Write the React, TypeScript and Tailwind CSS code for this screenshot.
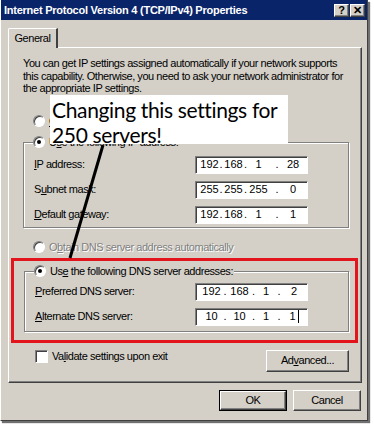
import React from "react";

const raised =
  "bg-[#d4d0c8] border border-t-white border-l-white border-r-[#404040] border-b-[#404040] shadow-[inset_-1px_-1px_0_#808080]";

const ipCols = "grid-cols-[15px_8px_17px_7px_19px_18px_14px]";
const dnsCols = "grid-cols-[19px_8px_21px_7px_18px_8px_22px]";

const U = ({ children }: { children: React.ReactNode }) => <span className="underline underline-offset-[1px]">{children}</span>;

const Radio = ({ checked, disabled }: { checked?: boolean; disabled?: boolean }) => (
  <span className="relative w-[12px] h-[12px] rounded-full bg-white border border-t-[#808080] border-l-[#808080] border-r-white border-b-white shadow-[inset_1px_1px_0_#404040] flex items-center justify-center shrink-0">
    {checked && <span className={`w-[4px] h-[4px] rounded-full ${disabled ? "bg-[#808080]" : "bg-black"}`} />}
  </span>
);

const IpBox = ({ parts, cols, cursor }: { parts: string[]; cols: string; cursor?: boolean }) => (
  <div className="w-[113px] h-[18px] bg-white border border-t-[#808080] border-l-[#808080] border-r-white border-b-white shadow-[inset_1px_1px_0_#404040] pl-[6px] flex items-center tracking-normal">
    <div className={`grid ${cols} items-center`}>
      {parts.map((p, i) => (
        <React.Fragment key={i}>
          {i > 0 && <span className="flex justify-center">.</span>}
          <span className="flex justify-center">
            {p}
            {cursor && i === parts.length - 1 && <span className="w-px h-[13px] bg-black ml-[2px]" />}
          </span>
        </React.Fragment>
      ))}
    </div>
  </div>
);

const Row = ({ label, parts, cols, cursor }: { label: React.ReactNode; parts: string[]; cols: string; cursor?: boolean }) => (
  <div className="flex items-center justify-between h-[18px]">
    <span>{label}</span>
    <IpBox parts={parts} cols={cols} cursor={cursor} />
  </div>
);

export default function App() {
  return (
    <div className="relative w-[374px] h-[426px] bg-white overflow-hidden text-[11px] tracking-[-0.45px] text-black font-['Liberation_Sans',Arial,sans-serif] leading-[13px]">
      <div className="w-[368px] h-[421px] bg-[#d4d0c8] border-r border-b border-[#404040] border-l border-l-white shadow-[2px_2px_1px_#707070] flex flex-col">
        {/* title bar */}
        <div className="h-[20px] bg-[#0a246a] flex items-center justify-between pl-[3px] pr-[2px]">
          <span className="text-white font-bold text-[11px] tracking-[-0.25px]">Internet Protocol Version 4 (TCP/IPv4) Properties</span>
          <div className="flex">
            <span className={`${raised} w-[15px] h-[13px] flex items-center justify-center font-bold text-[11px] leading-none`}>?</span>
            <span className={`${raised} w-[15px] h-[13px] ml-[1px] flex items-center justify-center font-bold text-[11px] leading-none`}>✕</span>
          </div>
        </div>

        {/* tab */}
        <div className="mt-[8px] ml-[7px] flex">
          <div className="h-[20px] w-[50px] border-t border-l border-white border-r-2 border-r-[#404040] rounded-tl-[2px] flex items-center justify-center relative z-10 mb-[-1px] bg-[#d4d0c8]">
            General
          </div>
        </div>

        {/* panel */}
        <div className="ml-[7px] w-[354px] h-[336px] border border-t-white border-l-white border-r-[#404040] border-b-[#404040] shadow-[inset_-1px_-1px_0_#808080] pl-[14px] pr-[10px] flex flex-col">
          <p className="mt-[9px] leading-[12.5px]">
            You can get IP settings assigned automatically if your network supports this capability. Otherwise, you need to ask your network administrator for the appropriate IP settings.
          </p>

          <div className="mt-[20px] ml-[10px] flex items-center gap-[4px] h-[13px]">
            <Radio />
            <span><U>O</U>btain an IP address automatically</span>
          </div>

          <fieldset className="mt-[8px] mr-[2px] border border-[#808080] shadow-[inset_1px_1px_0_white,1px_1px_0_white] px-[10px] pb-[3px]">
            <legend className="ml-[-1px] flex items-center gap-[4px] bg-[#d4d0c8] pr-[1px] h-[13px]">
              <Radio checked />
              <span>U<U>s</U>e the following IP address:</span>
            </legend>
            <div className="mt-[7px] flex flex-col gap-[7px] mr-[30px]">
              <Row label={<><U>I</U>P address:</>} parts={["192", "168", "1", "28"]} cols={ipCols} />
              <Row label={<>S<U>u</U>bnet mask:</>} parts={["255", "255", "255", "0"]} cols={ipCols} />
              <Row label={<><U>D</U>efault gateway:</>} parts={["192", "168", "1", "1"]} cols={ipCols} />
            </div>
          </fieldset>

          <div className="mt-[13px] ml-[10px] flex items-center gap-[4px] h-[13px] text-[#808080] [text-shadow:1px_1px_0_white]">
            <Radio disabled />
            <span>O<U>b</U>tain DNS server address automatically</span>
          </div>

          <div className="mt-[4px] ml-[-12px] w-[347px] border-[3px] border-[#e3151c] pt-[4px] pl-[10px] pr-[6px] pb-[8px]">
            <fieldset className="border border-[#808080] shadow-[inset_1px_1px_0_white,1px_1px_0_white] px-[10px] pb-[5px]">
              <legend className="ml-[-1px] flex items-center gap-[4px] bg-[#d4d0c8] pr-[1px] h-[13px]">
                <Radio checked />
                <span>Us<U>e</U> the following DNS server addresses:</span>
              </legend>
              <div className="mt-[5px] flex flex-col gap-[7px] mr-[30px]">
                <Row label={<><U>P</U>referred DNS server:</>} parts={["192", "168", "1", "2"]} cols={dnsCols} />
                <Row label={<><U>A</U>lternate DNS server:</>} parts={["10", "10", "1", "1"]} cols={dnsCols} cursor />
              </div>
            </fieldset>
          </div>

          <div className="mt-[7px] flex items-start justify-between">
            <div className="ml-[12px] flex items-center gap-[4px] h-[13px]">
              <span className="w-[13px] h-[13px] bg-white border border-t-[#808080] border-l-[#808080] border-r-white border-b-white shadow-[inset_1px_1px_0_#404040]" />
              <span>Va<U>l</U>idate settings upon exit</span>
            </div>
            <button className={`${raised} w-[83px] h-[22px] mr-[2px]`}>
              Ad<U>v</U>anced...
            </button>
          </div>
        </div>

        {/* dialog buttons */}
        <div className="mt-[7px] mr-[6px] flex justify-end gap-[6px]">
          <button className="w-[68px] h-[21px] border border-black">
            <span className={`${raised} w-full h-full flex items-center justify-center`}>OK</span>
          </button>
          <button className={`${raised} w-[68px] h-[21px]`}>Cancel</button>
        </div>
      </div>

      {/* annotation callout */}
      <div className="absolute left-[50px] top-[95px] w-[238px] h-[49px] bg-white pl-[2px] font-['Lato',sans-serif] text-[21px] tracking-[-0.35px] leading-[25px] text-black whitespace-nowrap">
        <div className="mt-[2px]">Changing this settings for</div>
        <div>250 servers!</div>
      </div>
      <svg className="absolute left-0 top-0" width="374" height="426">
        <line x1="103" y1="145" x2="70" y2="258" stroke="black" strokeWidth="3" />
      </svg>
    </div>
  );
}
